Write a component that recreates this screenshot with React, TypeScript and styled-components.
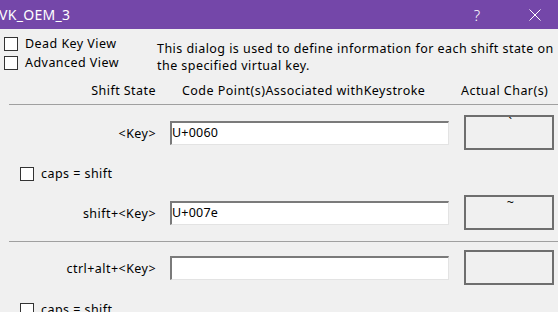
import React from "react";
import styled, { createGlobalStyle } from "styled-components";

type KeyRow = {
  label: string;
  code: string;
  actual: string;
};

const rows: KeyRow[] = [
  { label: "<Key>", code: "U+0060", actual: "`" },
  { label: "shift+<Key>", code: "U+007e", actual: "~" },
];

const GlobalStyle = createGlobalStyle`
  html, body {
    margin: 0;
    padding: 0;
    background: #f0f0f0;
    overflow: hidden;
  }
  body {
    font-family: "Noto Sans", "Open Sans", sans-serif;
    font-size: 12.5px;
    letter-spacing: 0.45px;
    color: #000;
  }
`;

const Window = styled.div`
  width: 558px;
  height: 312px;
  overflow: hidden;
  background: #f0f0f0;
`;

const TitleBar = styled.div`
  height: 29px;
  display: flex;
  align-items: center;
  background: #7447a9;
  color: #fff;
  font-size: 14px;
  letter-spacing: 0.3px;
`;

const Title = styled.div`
  flex: 1;
  margin-left: -1px;
`;

const TitleButton = styled.div<{ $width: number; $gap?: number }>`
  width: ${(p) => p.$width}px;
  margin-right: ${(p) => p.$gap || 0}px;
  display: flex;
  justify-content: center;
  align-items: center;
  height: 29px;
  font-size: 15px;
  font-weight: 300;
`;

const Top = styled.div`
  display: flex;
  padding: 7px 0 0 4px;
  height: 50px;
  box-sizing: border-box;
`;

const Checks = styled.div`
  display: flex;
  flex-direction: column;
  gap: 4px;
  width: 153px;
`;

const CheckLine = styled.label<{ $indent?: number }>`
  display: flex;
  align-items: center;
  gap: 7px;
  height: 15px;
  padding-left: ${(p) => p.$indent || 0}px;
  white-space: nowrap;
`;

const Box = styled.span`
  width: 12px;
  height: 12px;
  border: 1px solid #333;
  background: #fff;
  flex: none;
`;

const Description = styled.div`
  padding-top: 4px;
  line-height: 17px;
  white-space: nowrap;
`;

const Header = styled.div`
  display: flex;
  align-items: flex-end;
  height: 26px;
  margin-left: 9px;
  border-bottom: 1px solid #a0a0a0;
  padding-bottom: 5px;
  box-sizing: border-box;
  white-space: nowrap;
`;

const HeaderCell = styled.div<{ $width: number; $align?: string }>`
  width: ${(p) => p.$width}px;
  text-align: ${(p) => p.$align || "left"};
  flex: none;
`;

const Row = styled.div<{ $top: number }>`
  display: grid;
  grid-template-columns: 156px 278px 90px;
  column-gap: 15px;
  align-items: center;
  height: 35px;
  margin-top: ${(p) => p.$top}px;
`;

const Label = styled.div`
  text-align: right;
  padding-top: 1px;
  white-space: nowrap;
`;

const CodeInput = styled.div`
  height: 24px;
  margin-left: -1px;
  box-sizing: border-box;
  background: #fff;
  border-top: 2px solid #7a7a7a;
  border-left: 2px solid #7a7a7a;
  border-right: 1px solid #e3e3e3;
  border-bottom: 1px solid #e3e3e3;
  padding: 1px 0 0 0;
  line-height: 18px;
  letter-spacing: 0.2px;
`;

const ActualBox = styled.div`
  height: 35px;
  box-sizing: border-box;
  border: 2px solid #6e6e6e;
  text-align: center;
  line-height: 12px;
  padding-left: 3px;
`;

const Separator = styled.div<{ $top: number }>`
  height: 1px;
  margin: ${(p) => p.$top}px 0 0 9px;
  background: #a0a0a0;
`;

const CheckRow = styled.div<{ $top: number; $bottom?: number }>`
  margin-top: ${(p) => p.$top}px;
  margin-bottom: ${(p) => p.$bottom || 0}px;
`;

const App = () => {
  return (
    <Window>
      <GlobalStyle />
      <TitleBar>
        <Title>VK_OEM_3</Title>
        <TitleButton $width={46} $gap={12}>?</TitleButton>
        <TitleButton $width={46}>
          <svg width="12" height="12" viewBox="0 0 12 12">
            <path d="M0.5 0.5 L11.5 11.5 M11.5 0.5 L0.5 11.5" stroke="#fff" strokeWidth="1" />
          </svg>
        </TitleButton>
      </TitleBar>
      <Top>
        <Checks>
          <CheckLine>
            <Box />
            Dead Key View
          </CheckLine>
          <CheckLine>
            <Box />
            Advanced View
          </CheckLine>
        </Checks>
        <Description>
          This dialog is used to define information for each shift state on
          <br />
          the specified virtual key.
        </Description>
      </Top>
      <Header>
        <HeaderCell $width={147} $align="right">Shift State</HeaderCell>
        <HeaderCell $width={26} />
        <HeaderCell $width={279}>Code Point(s)Associated withKeystroke</HeaderCell>
        <HeaderCell $width={90}>Actual Char(s)</HeaderCell>
      </Header>
      {rows.map((row, i) => (
        <React.Fragment key={row.label}>
          <Row $top={i === 0 ? 10 : 0}>
            <Label>{row.label}</Label>
            <CodeInput>{row.code}</CodeInput>
            <ActualBox>{row.actual}</ActualBox>
          </Row>
          {i === 0 && (
            <CheckRow $top={16} $bottom={14}>
              <CheckLine $indent={20}>
                <Box />
                caps = shift
              </CheckLine>
            </CheckRow>
          )}
        </React.Fragment>
      ))}
      <Separator $top={11} />
      <Row $top={8}>
        <Label>ctrl+alt+&lt;Key&gt;</Label>
        <CodeInput />
        <ActualBox />
      </Row>
      <CheckRow $top={17}>
        <CheckLine $indent={20}>
          <Box />
          caps = shift
        </CheckLine>
      </CheckRow>
    </Window>
  );
};

export default App;
